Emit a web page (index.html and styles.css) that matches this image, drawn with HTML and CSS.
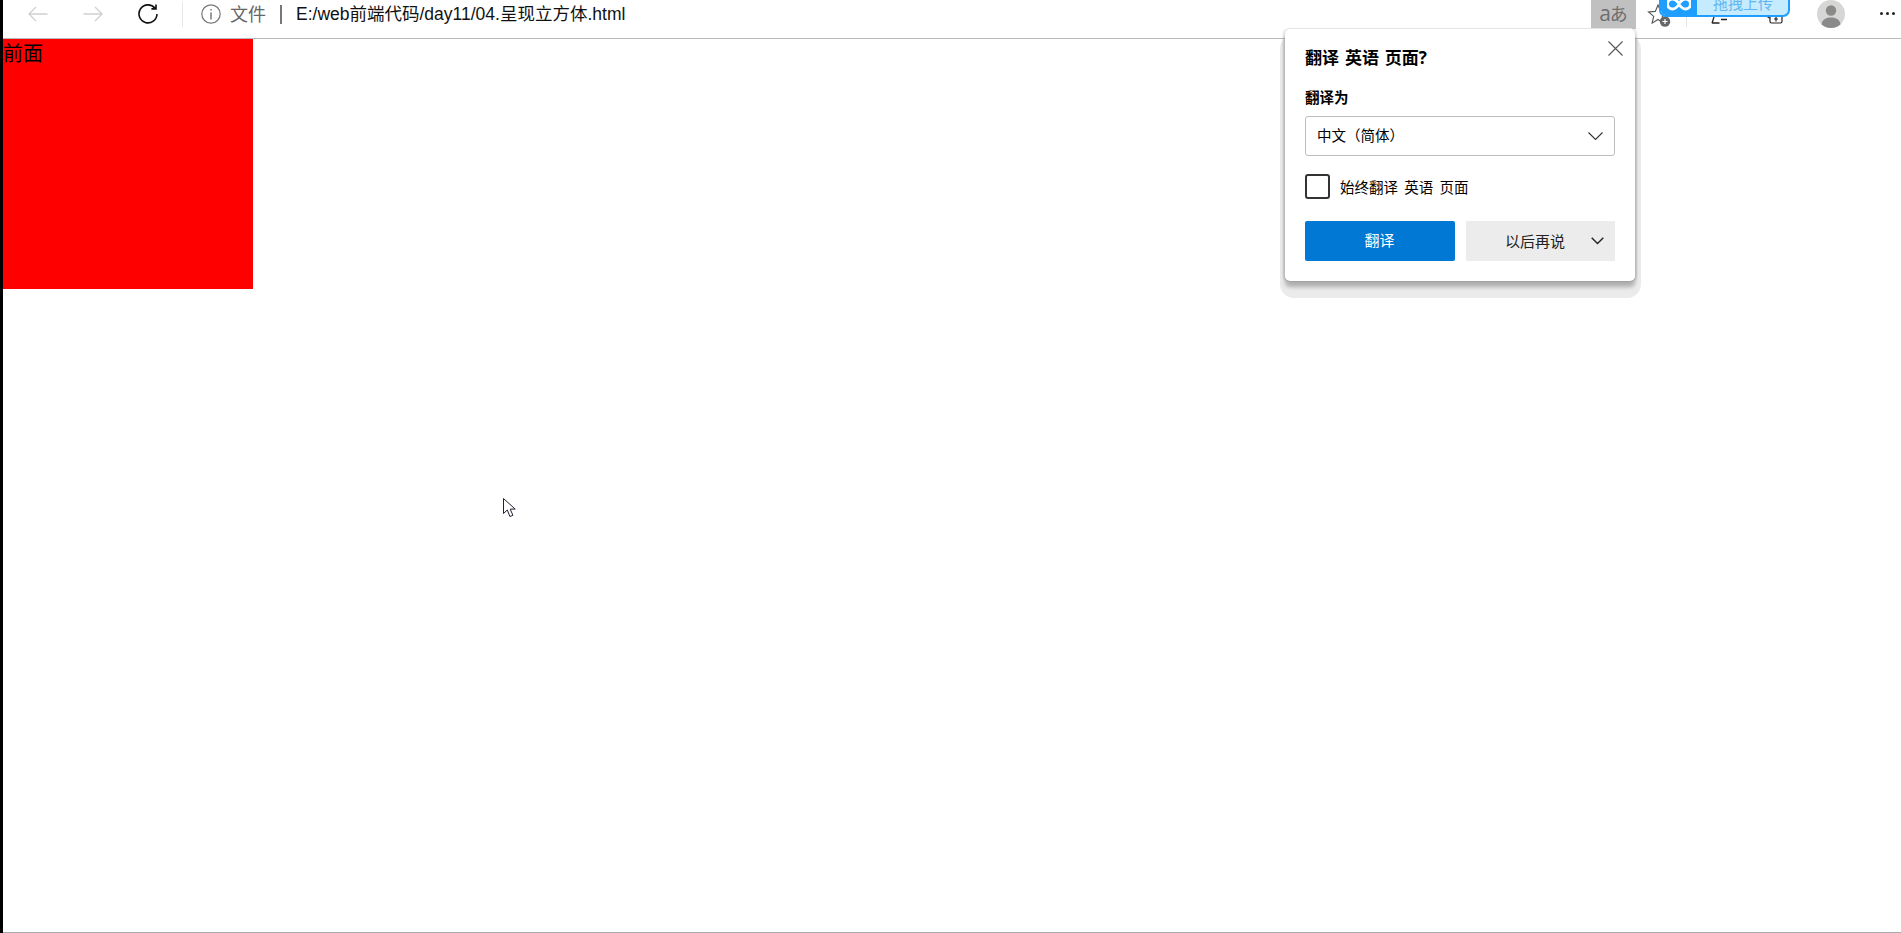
FILE: index.html
```html
<!DOCTYPE html>
<html lang="zh-CN">
<head>
<meta charset="utf-8">
<title>04.呈现立方体</title>
<link rel="stylesheet" href="styles.css">
</head>
<body>
<div class="strip"></div>
<div class="window">
  <header class="toolbar">
    <svg class="nav-icon" width="20" height="16" viewBox="0 0 20 16"><path d="M19.5 8H1M8 1 1 8l7 7" fill="none" stroke="#cfcfcf" stroke-width="1.3"/></svg>
    <svg class="nav-icon forward" width="20" height="16" viewBox="0 0 20 16"><path d="M.5 8H19M12 1l7 7-7 7" fill="none" stroke="#cfcfcf" stroke-width="1.3"/></svg>
    <svg class="reload" width="20" height="20" viewBox="0 0 20 20"><path d="M17 4.2A9 9 0 1 0 19 10M18 .5v4.4h-4.6" fill="none" stroke="#111" stroke-width="1.6"/></svg>
    <span class="sep"></span>
    <svg class="info" width="20" height="20" viewBox="0 0 20 20"><circle cx="10" cy="10" r="9.2" fill="none" stroke="#777" stroke-width="1.2"/><path d="M10 8.5V15.5M10 5v1.6" stroke="#666" stroke-width="1.3"/></svg>
    <span class="scheme">文件</span>
    <span class="bar"></span>
    <span class="url">E:/web前端代码/day11/04.呈现立方体.html</span>
    <div class="tools">
      <div class="translate-btn">a<span>あ</span></div>
      <svg class="star" width="26" height="24" viewBox="0 0 26 24"><path d="M11 2l2.7 6.4 6.8.6-5.2 4.4 1.6 6.7L11 16.500 5.100 20.100l1.600-6.700L1.500 9l6.800-.6z" fill="#fff" stroke="#555" stroke-width="1.100"/><circle cx="18" cy="18.500" r="5.200" fill="#666"/><path d="M15.500 18.500h5M18 16v5" stroke="#fff" stroke-width="1.200"/></svg>
      <span class="tool-sep"></span>
      <svg class="fav" width="17" height="8" viewBox="0 0 17 8"><path d="M1 7.200 3 1M1 7h7.500M10 3.500h6" fill="none" stroke="#222" stroke-width="1.300"/></svg>
      <svg class="coll" width="17" height="8" viewBox="0 0 17 8"><path d="M1 0q1 1.500 2.500 2M4 0v5.500q0 1.500 1.500 1.500h9q1.500 0 1.500-1.500V0M10 1v4.500M8 3h4" fill="none" stroke="#222" stroke-width="1.200"/></svg>
      <svg class="avatar" width="28" height="28" viewBox="0 0 28 28"><circle cx="14" cy="14" r="14" fill="#d6d6d4"/><circle cx="14" cy="10.500" r="5.200" fill="#8a8a8a"/><path d="M4.500 24.500C5.500 19 9.500 17.500 14 17.500s8.500 1.500 9.500 7Q19 28 14 28t-9.500-3.500z" fill="#8a8a8a"/></svg>
      <span class="dots"><i></i><i></i><i></i></span>
    </div>
  </header>
  <main class="page">
    <div class="cube-face">前面</div>
  </main>
</div>

<div class="drop-widget">
  <div class="drop-logo">
    <svg width="24" height="12" viewBox="0 0 24 12"><path d="M12 4.500C9.500 1 7.500 0 5.500 0a5 5 0 0 0 0 10c2 0 4-1 6.500-4.500C14.500 9 16.500 10 18.500 10a5 5 0 0 0 0-10c-2 0-4 1-6.500 4.500z" fill="none" stroke="#fff" stroke-width="3"/></svg>
  </div>
  <div class="drop-text">拖拽上传</div>
</div>

<section class="dialog">
  <h1 class="dialog-title">翻译 英语 页面?</h1>
  <svg class="close" width="15" height="15" viewBox="0 0 15 15"><path d="M.5.500l14 14M14.500.500l-14 14" stroke="#555" stroke-width="1.100"/></svg>
  <div class="field-label">翻译为</div>
  <div class="select">
    <span class="select-text">中文（简体）</span>
    <svg width="15" height="8" viewBox="0 0 15 8"><path d="M.5.500l7 7 7-7" fill="none" stroke="#333" stroke-width="1.100"/></svg>
  </div>
  <label class="check-row">
    <span class="checkbox"></span>
    <span class="check-text">始终翻译 英语 页面</span>
  </label>
  <div class="actions">
    <div class="btn-primary">翻译</div>
    <div class="btn-later">
      <span class="later-text">以后再说</span>
      <svg width="13" height="8" viewBox="0 0 13 8"><path d="M.7.700l5.800 5.800L12.300.700" fill="none" stroke="#222" stroke-width="1.400"/></svg>
    </div>
  </div>
</section>

<svg class="cursor" width="13" height="20" viewBox="0 0 13 20"><path d="M.5.500v15l3.800-3.500 2.600 6.500 3-1.200-2.700-6.200h5z" fill="#fff" stroke="#223" stroke-width="1"/></svg>
</body>
</html>
```
FILE: styles.css
```css
* { box-sizing: border-box; }
html, body { margin: 0; padding: 0; }
body {
  width: 1901px;
  height: 933px;
  overflow: hidden;
  display: flex;
  background: #fff;
  color: #000;
  font-family: "Open Sans", "Noto Sans CJK SC", sans-serif;
}
.strip { width: 3px; background: #000; flex: none; }
.window { flex: 1; display: flex; flex-direction: column; min-width: 0; }

.toolbar {
  height: 39px;
  flex: none;
  display: flex;
  align-items: center;
  padding: 0 0 10px 25px;
  border-bottom: 1px solid #b9b9b9;
  position: relative;
}
.forward { margin-left: 35px; }
.reload { margin-left: 35px; }
.sep { width: 1px; height: 25px; margin-left: 24px; background: #e8e8e8; }
.info { margin-left: 18px; }
.scheme { margin-left: 9px; font-size: 18px; line-height: 24px; color: #666; }
.bar { width: 2px; height: 19px; margin-left: 14px; background: #777; }
.url {
  margin-left: 14px;
  font-family: "Liberation Sans", "Noto Sans CJK SC", sans-serif;
  font-size: 17.500px;
  line-height: 24px;
  color: #111;
  white-space: nowrap;
}

.tools {
  margin-left: auto;
  align-self: flex-start;
  display: flex;
  align-items: flex-start;
  height: 38px;
}
.translate-btn {
  width: 45px;
  height: 29px;
  background: #c0c0c0;
  color: #6e6e6e;
  font-size: 21px;
  line-height: 26px;
  text-align: center;
  font-family: "Open Sans", "Noto Sans CJK JP", sans-serif;
}
.translate-btn span { font-size: 18px; margin-left: -1px; }
.star { margin: 3px 0 0 11px; }
.tool-sep { width: 1px; height: 11px; margin: 16px 0 0 13px; background: #e3e3e3; }
.fav { margin: 16px 0 0 24px; }
.coll { margin: 16px 0 0 38px; }
.avatar { margin-left: 34px; }
.dots { display: flex; gap: 3px; margin: 12px 6px 0 35px; }
.dots i { width: 3px; height: 3px; background: #222; border-radius: 50%; }

.page { flex: 1; border-bottom: 1px solid #aaa; }
.cube-face {
  width: 250px;
  height: 250px;
  background: #f00;
  font-size: 20px;
  line-height: 30px;
}

.drop-widget {
  position: absolute;
  left: 1659px;
  top: -20px;
  width: 131px;
  height: 37px;
  display: flex;
  background: #c5ebff;
  border: 2px solid #1e9fff;
  border-radius: 0 0 7px 7px;
  overflow: hidden;
}
.drop-logo {
  width: 36px;
  background: #1e9fff;
  display: flex;
  align-items: flex-end;
  justify-content: center;
  padding-bottom: 4px;
}
.drop-text {
  flex: 1;
  padding-left: 16px;
  font-size: 15px;
  line-height: 43px;
  color: #62b6ee;
  white-space: nowrap;
}

.dialog {
  position: absolute;
  left: 1285px;
  top: 29px;
  width: 350px;
  height: 252px;
  padding: 0 20px 20px;
  background: #fff;
  border-radius: 5px;
  box-shadow: 0 -1px 0 #e6e6e6, 0 6px 4px rgba(0, 0, 0, .26), 2px 0 2px rgba(0, 0, 0, .12), -2px 0 2px rgba(0, 0, 0, .12);
  font-size: 15px;
}
.dialog::before {
  content: "";
  position: absolute;
  z-index: -1;
  left: -5px;
  right: -6px;
  top: 6px;
  bottom: -17px;
  background: #ebebeb;
  border-radius: 14px;
}
.dialog-title {
  margin: 0;
  padding-top: 17px;
  font-size: 17px;
  line-height: 24px;
  font-weight: 700;
  word-spacing: 1.500px;
}
.close { position: absolute; top: 12px; right: 12px; }
.field-label { margin-top: 18px; font-size: 14.500px; line-height: 20px; font-weight: 700; }
.select {
  margin-top: 8px;
  height: 40px;
  display: flex;
  align-items: center;
  justify-content: space-between;
  padding: 0 11px 0 11px;
  border: 1px solid #bdbdbd;
  border-radius: 3px;
}
.select-text { font-size: 14.500px; padding-bottom: 4px; }
.check-row { display: flex; align-items: center; gap: 10px; margin-top: 18px; height: 25px; }
.check-text { font-size: 14.500px; word-spacing: 2.500px; }
.checkbox { width: 25px; height: 25px; border: 2px solid #333; border-radius: 3px; }
.actions { display: flex; gap: 11px; margin-top: 22px; }
.btn-primary {
  width: 150px;
  height: 40px;
  padding-right: 1px;
  background: #0078d4;
  color: #fff;
  border-radius: 2px;
  text-align: center;
  line-height: 38px;
}
.btn-later {
  width: 149px;
  height: 40px;
  background: #ececec;
  color: #222;
  display: flex;
  align-items: center;
  justify-content: space-between;
  padding: 0 11px 0 39px;
}
.later-text { padding-bottom: 2px; }

.cursor { position: absolute; left: 503px; top: 498px; }
```
